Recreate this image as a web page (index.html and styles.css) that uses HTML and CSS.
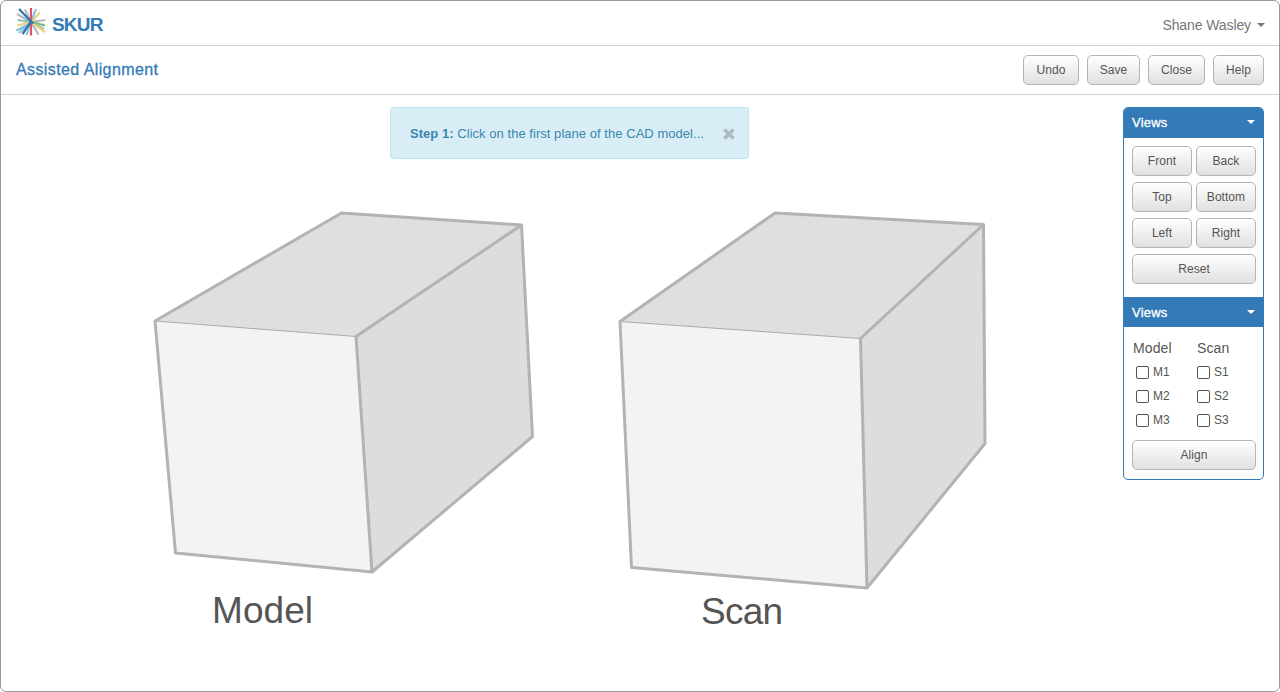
FILE: index.html
```html
<!DOCTYPE html>
<html lang="en">
<head>
<meta charset="utf-8">
<title>SKUR</title>
<link rel="stylesheet" href="styles.css">
</head>
<body>
<div class="app">
  <header class="topbar">
    <div class="brand">
      <svg class="brand-mark" viewBox="0 0 30 30" width="30" height="30" fill="none" stroke-width="2.2">
        <path stroke="#b3bcc1" d="M1 7 15 15M9 2.500 15 15M15 15 29.500 13M15 15 22.500 27.500"/>
        <path stroke="#8ec6e0" d="M20 2 15 15M15 15 10.500 28M15 15 28 22M3 26 15 15"/>
        <path stroke="#efcf7a" d="M1.500 18.500 15 15M24 5.500 15 15"/>
        <path stroke="#7fc0dc" d="M0.500 23.500 15 16"/>
        <path stroke="#8fc0b0" d="M1.500 13 15 15"/>
        <path stroke="#df5360" d="M15 1V28.500"/>
        <path stroke="#efcf7a" d="M15 15 29 25"/>
        <path stroke="#7fb77a" d="M14 14.500 29 18.500"/>
        <path stroke="#2f74ae" d="M3 2 17 16.500M15 15 6.500 27"/>
      </svg>
      <span class="brand-name">SKUR</span>
    </div>
    <div class="user"><span class="user-name">Shane Wasley</span><span class="caret"></span></div>
  </header>
  <div class="toolbar">
    <h1 class="title">Assisted Alignment</h1>
    <div class="actions">
      <button class="btn undo">Undo</button>
      <button class="btn save">Save</button>
      <button class="btn close">Close</button>
      <button class="btn help">Help</button>
    </div>
  </div>
  <main class="workspace">
    <div class="stage">
      <svg class="scene" viewBox="1 95 1122 596" width="1122" height="596">
        <g class="faces">
          <path class="shade-top" d="M155 321 341.500 213 521.500 225 356 336.500Z"/>
          <path class="shade-side" d="M356 336.500 521.500 225 532.500 436.500 372 572Z"/>
          <path class="shade-front" d="M155 321 356 336.500 372 572 175.500 553Z"/>
          <path class="shade-top" d="M620 321.500 775 213 983.500 224.500 860.500 338.500Z"/>
          <path class="shade-side" d="M860.500 338.500 983.500 224.500 985 443.500 867 588Z"/>
          <path class="shade-front" d="M620 321.500 860.500 338.500 867 588 631.500 567.500Z"/>
        </g>
        <path class="edge-thin" d="M155 321 356 336.500M620 321.500 860.500 338.500"/>
        <path class="edge" d="M155 321 341.500 213 521.500 225 532.500 436.500 372 572 175.500 553ZM521.500 225 356 336.500 372 572"/>
        <path class="edge" d="M620 321.500 775 213 983.500 224.500 985 443.500 867 588 631.500 567.500ZM983.500 224.500 860.500 338.500 867 588"/>
        <text class="label" x="262.500" y="623" textLength="101">Model</text>
        <text class="label" x="742" y="624" textLength="82">Scan</text>
      </svg>
      <div class="hint">
        <p class="hint-text"><strong>Step 1:</strong> Click on the first plane of the CAD model...</p>
        <svg class="hint-close" viewBox="0 0 12 12" width="12" height="12"><path d="M1.500 1.500 10.500 10.500M10.500 1.500 1.500 10.500"/></svg>
      </div>
    </div>
    <aside class="panel">
      <h2 class="panel-head first">Views<span class="caret"></span></h2>
      <div class="view-grid">
        <button class="btn">Front</button><button class="btn">Back</button>
        <button class="btn">Top</button><button class="btn">Bottom</button>
        <button class="btn">Left</button><button class="btn">Right</button>
        <button class="btn wide">Reset</button>
      </div>
      <h2 class="panel-head">Views<span class="caret"></span></h2>
      <div class="planes">
        <div class="plane-col model">
          <h3 class="plane-title">Model</h3>
          <label class="check"><span class="box"></span>M1</label>
          <label class="check"><span class="box"></span>M2</label>
          <label class="check"><span class="box"></span>M3</label>
        </div>
        <div class="plane-col">
          <h3 class="plane-title">Scan</h3>
          <label class="check"><span class="box"></span>S1</label>
          <label class="check"><span class="box"></span>S2</label>
          <label class="check"><span class="box"></span>S3</label>
        </div>
      </div>
      <button class="btn align">Align</button>
    </aside>
  </main>
</div>
</body>
</html>
```
FILE: styles.css
```css
* { box-sizing: border-box; }
body { margin: 0; background: #fff; color: #555; font-family: "Liberation Sans", Arial, sans-serif; }
h1, h2, h3, p { margin: 0; font-weight: 400; }

.app { height: 692px; border: 1px solid #999; border-radius: 6px; overflow: hidden; display: flex; flex-direction: column; }

.topbar { height: 45px; flex: none; border-bottom: 1px solid #d0d0d0; display: flex; justify-content: space-between; padding: 0 14px 0 15px; }
.brand { display: flex; align-items: center; gap: 6px; }
.brand-mark { margin-top: -2px; }
.brand-name { color: #337ab7; font-size: 19px; font-weight: 700; letter-spacing: -0.8px; padding-top: 4px; }
.user { display: flex; align-items: center; gap: 6px; color: #777; font-size: 14px; padding-top: 3px; }
.user-name { letter-spacing: -0.1px; }
.caret { border: 4px solid transparent; border-top-color: currentColor; border-bottom: 0; }

.toolbar { height: 49px; flex: none; border-bottom: 1px solid #d0d0d0; display: flex; justify-content: space-between; align-items: center; padding: 0 15px; }
.title { color: #337ab7; font-size: 16px; letter-spacing: 0.4px; -webkit-text-stroke: 0.3px #337ab7; }
.actions { display: flex; gap: 8px; }

.btn { height: 30px; padding: 0; border: 1px solid #b4b4b4; border-radius: 5px; background: linear-gradient(#fff, #e0e0e0); color: #555; font: 12px "Liberation Sans", Arial, sans-serif; letter-spacing: 0.05px; }
.undo { width: 56px; }
.save { width: 53px; }
.close { width: 57px; }
.help { width: 51px; }

.workspace { display: flex; height: 596px; }
.stage { position: relative; width: 1122px; }
.scene { display: block; }
.shade-top { fill: #dfdfdf; }
.shade-side { fill: #ddd; }
.shade-front { fill: #f3f3f3; }
.edge { fill: none; stroke: #b3b3b3; stroke-width: 3; stroke-linejoin: round; }
.edge-thin { fill: none; stroke: #aaa; stroke-width: 1; }
.label { font-size: 37px; fill: #555; text-anchor: middle; }

.hint { position: absolute; left: 389px; top: 12px; width: 359px; height: 52px; border: 1px solid #bce8f1; border-radius: 3px; background: #d9edf7; display: flex; align-items: center; justify-content: space-between; padding: 0 13px 0 19px; color: #3a87ad; font-size: 13px; }
.hint-text { letter-spacing: 0.04px; white-space: nowrap; }
.hint-close { fill: none; stroke: #abbbc3; stroke-width: 3.6; margin-top: 1px; }

.panel { width: 141px; height: 373px; margin-top: 12px; border: 1px solid #337ab7; border-radius: 5px; overflow: hidden; display: flex; flex-direction: column; }
.panel-head { height: 30px; flex: none; background: #337ab7; color: #fff; font-size: 13px; letter-spacing: 0.2px; -webkit-text-stroke: 0.3px #fff; display: flex; align-items: center; justify-content: space-between; padding: 0 8px; }
.first { padding-bottom: 2px; }
.view-grid { height: 159px; padding: 8px 7px 0 8px; display: grid; grid-template-columns: 60px 60px; grid-auto-rows: 30px; gap: 6px 4px; }
.wide { grid-column: span 2; }
.planes { display: flex; padding: 11px 0 0 9px; height: 113px; }
.plane-col { display: flex; flex-direction: column; }
.model { width: 64px; }
.model .box { margin-left: 3px; }
.plane-title { font-size: 14px; line-height: 20px; height: 22px; letter-spacing: 0.1px; }
.check { height: 24px; display: flex; align-items: center; gap: 4px; font-size: 12px; }
.box { width: 13px; height: 13px; border: 1px solid #555; border-radius: 2px; }
.align { margin-left: 8px; width: 124px; }
```
